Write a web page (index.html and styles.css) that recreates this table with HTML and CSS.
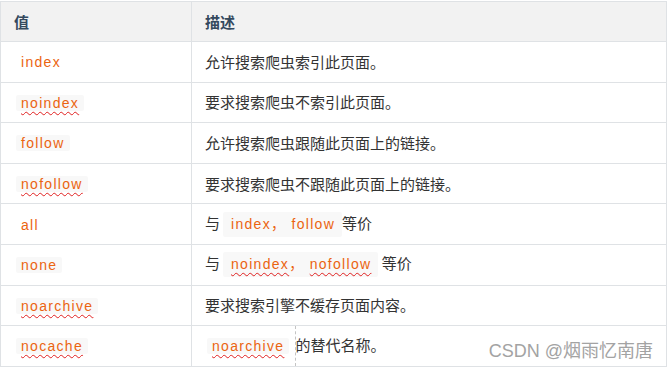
FILE: index.html
```html
<!DOCTYPE html>
<html lang="zh-CN">
<head>
<meta charset="utf-8">
<title>robots meta</title>
<link rel="stylesheet" href="styles.css">
</head>
<body>
<div class="page">
  <table class="meta-table">
    <colgroup>
      <col class="c1">
      <col class="c2">
    </colgroup>
    <thead>
      <tr><th>值</th><th>描述</th></tr>
    </thead>
    <tbody>
      <tr><td><span class="code plain">index</span></td><td>允许搜索爬虫索引此页面。</td></tr>
      <tr><td><span class="code typo">noindex</span></td><td>要求搜索爬虫不索引此页面。</td></tr>
      <tr><td><span class="code">follow</span></td><td>允许搜索爬虫跟随此页面上的链接。</td></tr>
      <tr><td><span class="code typo">nofollow</span></td><td>要求搜索爬虫不跟随此页面上的链接。</td></tr>
      <tr><td><span class="code plain">all</span></td><td>与<span class="code tall">index， follow</span>等价</td></tr>
      <tr><td><span class="code">none</span></td><td>与<span class="code tall"><span class="typo">noindex</span>， <span class="typo">nofollow</span></span> 等价</td></tr>
      <tr><td><span class="code typo">noarchive</span></td><td>要求搜索引擎不缓存页面内容。</td></tr>
      <tr><td><span class="code typo">nocache</span></td><td class="split"><span class="code typo gap">noarchive</span><span class="caret"></span>的替代名称。</td></tr>
    </tbody>
  </table>
  <div class="watermark">CSDN @烟雨忆南唐</div>
</div>
</body>
</html>
```

FILE: styles.css
```css
html, body {
  margin: 0;
  padding: 0;
  background: #ffffff;
}

.page {
  position: relative;
  width: 668px;
  height: 369px;
  overflow: hidden;
  font-family: "Noto Sans CJK SC", "Liberation Sans", sans-serif;
  color: #333333;
}

.meta-table {
  border-collapse: collapse;
  table-layout: fixed;
  width: 667px;
  margin-top: 1px;
  font-size: 15px;
}

.meta-table col.c1 { width: 191px; }

.meta-table th,
.meta-table td {
  border: 1px solid #dfe2e5;
  padding: 0 13px;
  text-align: left;
  vertical-align: middle;
  white-space: nowrap;
}

.meta-table th {
  height: 39px;
  background: #f2f2f2;
  font-weight: 700;
  color: #34495e;
}

.meta-table td {
  height: 39.6px;
  line-height: 20px;
}

.code {
  font-family: "Liberation Sans", "Noto Sans CJK SC", sans-serif;
  font-size: 14px;
  letter-spacing: 1.3px;
  color: #eb6410;
  background: #f8f8f8;
  padding: 0 5px;
  margin: 0 2px;
  border-radius: 2px;
}

.code.plain {
  background: transparent;
}

.code.tall {
  display: inline-block;
  line-height: 25px;
  padding: 0 7px 0 8px;
  margin: 0 0 0 3px;
  vertical-align: middle;
}

.code.gap {
  margin-right: 6px;
}

.typo {
  text-decoration: underline wavy #e02020;
  text-decoration-thickness: 1px;
  text-underline-offset: 3px;
  text-decoration-skip-ink: none;
}

.split {
  position: relative;
}

.caret {
  position: absolute;
  top: 0;
  bottom: 0;
  left: 103px;
  border-left: 1px dashed #c4c4c4;
}

.watermark {
  position: absolute;
  right: 15px;
  top: 336px;
  font-family: "Liberation Sans", "Noto Sans CJK SC", sans-serif;
  font-size: 18px;
  color: #a3a3a3;
  text-shadow: 0 0 1px rgba(255, 255, 255, 0.9);
  white-space: nowrap;
}
```
